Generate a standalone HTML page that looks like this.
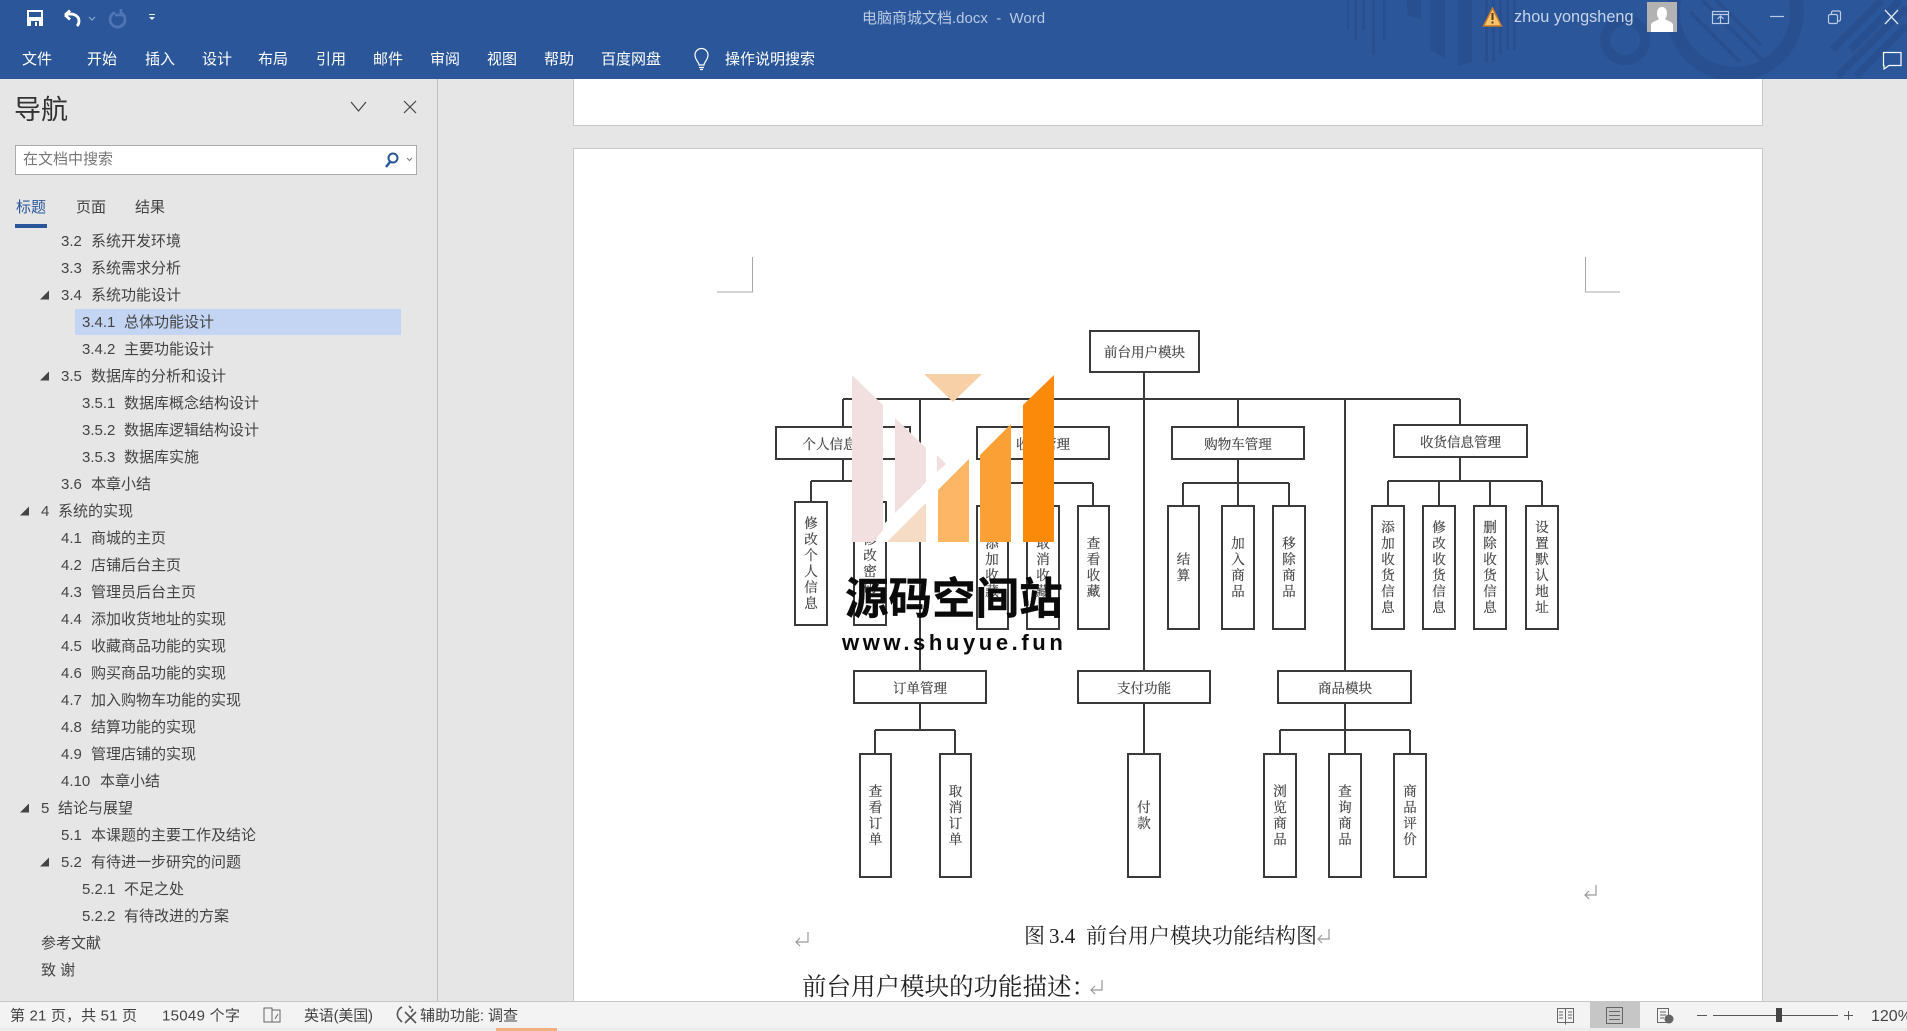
<!DOCTYPE html>
<html><head><meta charset="utf-8"><style>
html,body{margin:0;padding:0;background:#e6e6e6;width:1907px;height:1031px;overflow:hidden}
svg{display:block;position:absolute;left:0;top:0}
text{font-family:"Liberation Sans","Noto Sans CJK SC",sans-serif}
.t{font-size:15px;fill:#fff}
.n{font-size:15px;fill:#444}
.d{font-family:"Liberation Serif","Noto Serif CJK SC",serif;font-size:13.5px;fill:#444;stroke:#444;stroke-width:.2;text-anchor:middle}
.v{font-family:"Noto Serif CJK SC",serif;font-size:13.5px;fill:#444;stroke:#444;stroke-width:.2;text-anchor:middle;writing-mode:tb;glyph-orientation-vertical:0;text-orientation:upright;letter-spacing:2.5px}
.b{fill:#fff;stroke:#3a3a3a;stroke-width:2}
.l{fill:none;stroke:#3a3a3a;stroke-width:2}
.s{font-size:15px;fill:#444}
.a{fill:none;stroke:#999;stroke-width:1.2}
</style></head><body>
<svg width="1907" height="1031" viewBox="0 0 1907 1031" xmlns="http://www.w3.org/2000/svg">
<rect width="1907" height="1031" fill="#e6e6e6"/>
<!-- title bar -->
<rect width="1907" height="79" fill="#2b579a"/>
<g fill="#284f8f" stroke="none">
<rect x="1347" y="0" width="2" height="30"/><rect x="1354" y="0" width="3" height="40"/><rect x="1362" y="0" width="3" height="30"/><rect x="1372" y="0" width="3" height="55"/><rect x="1383" y="0" width="3" height="40"/>
<path d="M1407 0h14v20l-14-5zM1430 0h15v58l-15-8zM1458 0h14v62l-14 4z"/>
<rect x="1485" y="0" width="3" height="62"/><rect x="1492" y="0" width="3" height="62"/><rect x="1499" y="0" width="3" height="55"/><rect x="1506" y="0" width="3" height="50"/><rect x="1513" y="0" width="3" height="50"/>
</g>
<g fill="none" stroke="#284f8f">
<circle cx="1625" cy="40" r="20" stroke-width="10"/><circle cx="1735" cy="12" r="62" stroke-width="14"/>
<path d="M1690 12l50 50M1702 0l60 60M1716 0l45 45" stroke-width="4"/>
<path d="M1838 76l69-69M1856 76l51-51M1832 50l50-50M1850 50l50-50" stroke-width="7"/>
</g>
<!-- quick access -->
<path d="M27 10h16v16H27z" fill="#fff"/><path d="M29 12h12v5H29zM31 21h8v5h-8z" fill="#2b579a"/><rect x="35" y="22" width="2" height="4" fill="#fff"/>
<path d="M65 15c8-3 14 1 14 6 0 2-1 4-2 5M65 15l5-4.500M65 15l5 4.500" fill="none" stroke="#fff" stroke-width="2.800"/>
<path d="M89 17l3 3 3-3" fill="none" stroke="#8aa6d2" stroke-width="1.200"/>
<path d="M115 12.500a7.500 7.500 0 1 0 7 1M121 9v6h-6" fill="none" stroke="#4f76b3" stroke-width="2.800"/>
<path d="M149 17h6l-3 3zM149 14h6v1h-6z" fill="#e8eef8"/>
<text x="862" y="23" style="font-size:15px" fill="#b8c9e4">电脑商城文档.docx&#160;&#160;-&#160;&#160;Word</text>
<!-- warning -->
<path d="M1492.500 8l9 18h-18z" fill="#f6c46a" stroke="#c9772b" stroke-width="1.400"/><rect x="1491.500" y="13" width="2" height="7" fill="#5b3c12"/><rect x="1491.500" y="21.500" width="2" height="2" fill="#5b3c12"/>
<text x="1514" y="22" style="font-size:16.300px" fill="#c6d4ea">zhou yongsheng</text>
<rect x="1647" y="2" width="30" height="30" fill="#b2b2b2"/>
<path d="M1651 32v-7c0-3 5-4 8-6-3-3-3-12 3-12s6 9 3 12c3 2 8 3 8 6v7z" fill="#fff"/>
<g fill="none" stroke="#b9cae5" stroke-width="1.200"><rect x="1712.500" y="11.500" width="16" height="12"/><path d="M1712.500 14.500h16M1720.500 23v-7M1717.500 19l3-3 3 3"/>
<path d="M1770 16.500h14"/><rect x="1828.500" y="14.500" width="9" height="9" rx="1.500"/><path d="M1831.500 14.500v-2a1.500 1.500 0 0 1 1.500-1.500h6a1.500 1.500 0 0 1 1.500 1.500v7a1.500 1.500 0 0 1-1.500 1.500h-1.500"/>
<path d="M1885 10l13 14M1898 10l-13 14" stroke="#dbe4f2" stroke-width="1.300"/></g>
<path d="M1883.500 52.500h17.500v13h-12l-5 3.500v-3.500h-.5z" fill="none" stroke="#fff" stroke-width="1.200"/>
<!-- tabs -->
<g class="tabs">
<text class="t" x="22" y="64">文件</text><text class="t" x="87" y="64">开始</text><text class="t" x="145" y="64">插入</text><text class="t" x="202" y="64">设计</text><text class="t" x="258" y="64">布局</text><text class="t" x="316" y="64">引用</text><text class="t" x="373" y="64">邮件</text><text class="t" x="430" y="64">审阅</text><text class="t" x="487" y="64">视图</text><text class="t" x="544" y="64">帮助</text><text class="t" x="601" y="64">百度网盘</text><text class="t" x="725" y="64">操作说明搜索</text>
</g>
<path d="M699 65c0-3-4-5-4-10a6.500 6.500 0 0 1 13 0c0 5-4 7-4 10zM699 67.500h5M700 69.500h3" fill="none" stroke="#fff" stroke-width="1.200"/>
<!-- nav -->
<rect x="437" y="79" width="1" height="922" fill="#bdbdbd"/>
<text x="14" y="119" style="font-size:27px" fill="#333">导航</text>
<path d="M351 102l7.500 9 7.500-9M404 101l12 12M416 101l-12 12" fill="none" stroke="#444" stroke-width="1.200"/>
<rect x="15.500" y="145.500" width="401" height="29" fill="#fff" stroke="#ababab"/>
<text x="23" y="164" style="font-size:15px" fill="#777">在文档中搜索</text>
<circle cx="393" cy="158" r="4.500" fill="none" stroke="#2b579a" stroke-width="2"/><path d="M390 162l-4 5" stroke="#2b579a" stroke-width="2.500"/>
<path d="M407 158l2.500 2.500 2.500-2.500" fill="none" stroke="#777"/>
<text x="16" y="212" class="n" style="fill:#2b579a">标题</text><text x="76" y="212" class="n">页面</text><text x="135" y="212" class="n">结果</text>
<rect x="15" y="224" width="32" height="4" fill="#2b579a"/>
<rect x="75" y="309" width="326" height="26" fill="#c3d5f2"/>
<g fill="#444">
<path d="M40 299.500l9-9v9zM40 380.500l9-9v9zM20 515.500l9-9v9zM20 812.500l9-9v9zM40 866.500l9-9v9z"/>
</g>
<g class="tree">
<text class="n" x="61" y="246">3.2</text><text class="n" x="91" y="246">系统开发环境</text>
<text class="n" x="61" y="273">3.3</text><text class="n" x="91" y="273">系统需求分析</text>
<text class="n" x="61" y="300">3.4</text><text class="n" x="91" y="300">系统功能设计</text>
<text class="n" x="82" y="327">3.4.1</text><text class="n" x="124" y="327">总体功能设计</text>
<text class="n" x="82" y="354">3.4.2</text><text class="n" x="124" y="354">主要功能设计</text>
<text class="n" x="61" y="381">3.5</text><text class="n" x="91" y="381">数据库的分析和设计</text>
<text class="n" x="82" y="408">3.5.1</text><text class="n" x="124" y="408">数据库概念结构设计</text>
<text class="n" x="82" y="435">3.5.2</text><text class="n" x="124" y="435">数据库逻辑结构设计</text>
<text class="n" x="82" y="462">3.5.3</text><text class="n" x="124" y="462">数据库实施</text>
<text class="n" x="61" y="489">3.6</text><text class="n" x="91" y="489">本章小结</text>
<text class="n" x="41" y="516">4</text><text class="n" x="58" y="516">系统的实现</text>
<text class="n" x="61" y="543">4.1</text><text class="n" x="91" y="543">商城的主页</text>
<text class="n" x="61" y="570">4.2</text><text class="n" x="91" y="570">店铺后台主页</text>
<text class="n" x="61" y="597">4.3</text><text class="n" x="91" y="597">管理员后台主页</text>
<text class="n" x="61" y="624">4.4</text><text class="n" x="91" y="624">添加收货地址的实现</text>
<text class="n" x="61" y="651">4.5</text><text class="n" x="91" y="651">收藏商品功能的实现</text>
<text class="n" x="61" y="678">4.6</text><text class="n" x="91" y="678">购买商品功能的实现</text>
<text class="n" x="61" y="705">4.7</text><text class="n" x="91" y="705">加入购物车功能的实现</text>
<text class="n" x="61" y="732">4.8</text><text class="n" x="91" y="732">结算功能的实现</text>
<text class="n" x="61" y="759">4.9</text><text class="n" x="91" y="759">管理店铺的实现</text>
<text class="n" x="61" y="786">4.10</text><text class="n" x="100" y="786">本章小结</text>
<text class="n" x="41" y="813">5</text><text class="n" x="58" y="813">结论与展望</text>
<text class="n" x="61" y="840">5.1</text><text class="n" x="91" y="840">本课题的主要工作及结论</text>
<text class="n" x="61" y="867">5.2</text><text class="n" x="91" y="867">有待进一步研究的问题</text>
<text class="n" x="82" y="894">5.2.1</text><text class="n" x="124" y="894">不足之处</text>
<text class="n" x="82" y="921">5.2.2</text><text class="n" x="124" y="921">有待改进的方案</text>
<text class="n" x="41" y="948">参考文献</text>
<text class="n" x="41" y="975">致 谢</text>
</g>
<!-- pages -->
<path d="M573.500 79V125.500H1762.500V79" fill="#fff" stroke="#c8c8c8"/>
<rect x="573.500" y="148.500" width="1189" height="880" fill="#fff" stroke="#c8c8c8"/>
<path d="M752.500 257v35H717M1585.500 257v35H1620" fill="none" stroke="#a8a8a8"/>
<!-- diagram -->
<g>
<path class="l" d="M1144 372V671M843 399H1460M843 399v28M920 399V671M1043 399v28M1238 399v28M1345 399V671M1460 399v26
M843 459v22M811 481H870M811 481v21M870 481v21
M1043 459v24M992 483H1093M992 483v23M1043 483v23M1093 483v23
M1238 459v24M1183 483H1289M1183 483v23M1238 483v23M1289 483v23
M1460 457v24M1388 481H1542M1388 481v25M1439 481v25M1490 481v25M1542 481v25
M920 703v27M875 730H955M875 730v24M955 730v24
M1144 703v51
M1345 703v27M1280 730H1410M1280 730v24M1345 730v24M1410 730v24"/>
<rect class="b" x="1090" y="331" width="109" height="41"/>
<rect class="b" x="776" y="427" width="134" height="32"/>
<rect class="b" x="977" y="427" width="132" height="32"/>
<rect class="b" x="1172" y="427" width="132" height="32"/>
<rect class="b" x="1394" y="425" width="133" height="32"/>
<rect class="b" x="854" y="671" width="132" height="32"/>
<rect class="b" x="1078" y="671" width="132" height="32"/>
<rect class="b" x="1278" y="671" width="133" height="32"/>
<rect class="b" x="795" y="502" width="32" height="123"/>
<rect class="b" x="854" y="502" width="32" height="123"/>
<rect class="b" x="977" y="506" width="31" height="123"/>
<rect class="b" x="1027" y="506" width="32" height="123"/>
<rect class="b" x="1078" y="506" width="31" height="123"/>
<rect class="b" x="1168" y="506" width="31" height="123"/>
<rect class="b" x="1222" y="506" width="32" height="123"/>
<rect class="b" x="1273" y="506" width="32" height="123"/>
<rect class="b" x="1372" y="506" width="32" height="123"/>
<rect class="b" x="1423" y="506" width="32" height="123"/>
<rect class="b" x="1474" y="506" width="32" height="123"/>
<rect class="b" x="1526" y="506" width="32" height="123"/>
<rect class="b" x="860" y="754" width="31" height="123"/>
<rect class="b" x="940" y="754" width="31" height="123"/>
<rect class="b" x="1128" y="754" width="32" height="123"/>
<rect class="b" x="1264" y="754" width="32" height="123"/>
<rect class="b" x="1329" y="754" width="32" height="123"/>
<rect class="b" x="1394" y="754" width="32" height="123"/>
<text class="d" x="1144.500" y="357">前台用户模块</text>
<text class="d" x="843" y="449">个人信息管理</text>
<text class="d" x="1043" y="449">收藏管理</text>
<text class="d" x="1238" y="449">购物车管理</text>
<text class="d" x="1460.500" y="447">收货信息管理</text>
<text class="d" x="920" y="693">订单管理</text>
<text class="d" x="1144" y="693">支付功能</text>
<text class="d" x="1345" y="693">商品模块</text>
<text class="v" x="811" y="564">修改个人信息</text>
<text class="v" x="870" y="564">修改密码</text>
<text class="v" x="992" y="568">添加收藏</text>
<text class="v" x="1043" y="568">取消收藏</text>
<text class="v" x="1093.500" y="568">查看收藏</text>
<text class="v" x="1183.500" y="568">结算</text>
<text class="v" x="1238" y="568">加入商品</text>
<text class="v" x="1289" y="568">移除商品</text>
<text class="v" x="1388" y="568">添加收货信息</text>
<text class="v" x="1439" y="568">修改收货信息</text>
<text class="v" x="1490" y="568">删除收货信息</text>
<text class="v" x="1542" y="568">设置默认地址</text>
<text class="v" x="875.500" y="816">查看订单</text>
<text class="v" x="955.500" y="816">取消订单</text>
<text class="v" x="1144" y="816">付款</text>
<text class="v" x="1280" y="816">浏览商品</text>
<text class="v" x="1345" y="816">查询商品</text>
<text class="v" x="1410" y="816">商品评价</text>
</g>
<!-- watermark -->
<path d="M883 448L926 482V503L887 542H883L926 482z" fill="#fff"/>
<path d="M926 420H938V542H926z" fill="#fff"/>
<path d="M926 482L895 513 883 525V542H887L926 503z" fill="#fff"/>
<path d="M852 375L883 405V530L873 542H852z" fill="#f2e0e0"/>
<path d="M895 418L926 448V482L895 513z" fill="#f2e0e0"/>
<path d="M937 455L946 464 937 472z" fill="#f2e0e0"/>
<path d="M887 542L926 503V542z" fill="#f7dcc5"/>
<path d="M924 374H982L953 402z" fill="#f8d0a8"/>
<path d="M938 490L969 459V542H938z" fill="#fcb665"/>
<path d="M980 455L1011 424V542H980z" fill="#fba035"/>
<path d="M1023 405L1054 375V542H1023z" fill="#fb8a0a"/>
<text x="845" y="614" style="font-family:'Noto Sans CJK SC',sans-serif;font-size:43.500px;font-weight:700;stroke:#0a0a0a;stroke-width:.4" fill="#0a0a0a">源码空间站</text>
<text x="842" y="650" style="font-family:'Liberation Sans',sans-serif;font-size:22px;font-weight:700;letter-spacing:3.6px" fill="#0a0a0a">www.shuyue.fun</text>
<!-- captions -->
<text x="1024" y="943" style="font-family:'Noto Serif CJK SC',serif;font-size:21px" fill="#222">图</text>
<text x="1049" y="943" style="font-family:'Liberation Serif',serif;font-size:21px" fill="#222">3.4</text>
<text x="1086" y="943" style="font-family:'Noto Serif CJK SC',serif;font-size:21px" fill="#222">前台用户模块功能结构图</text>
<text x="802" y="995" style="font-family:'Noto Serif CJK SC',serif;font-size:24.500px" fill="#222">前台用户模块的功能描述：</text>
<path class="a" d="M1329 929v10h-11M1322 935l-4 4 4 4M808 932v10h-12M800 938l-4 4 4 4M1596 885v10h-11M1589 891l-4 4 4 4M1102 980v10h-11M1095 986l-4 4 4 4"/>
<!-- status bar -->
<rect y="1001" width="1907" height="30" fill="#f3f3f3"/>
<rect y="1001" width="1907" height="1" fill="#c6c6c6"/>
<rect y="1028" width="1907" height="3" fill="#ececec"/>
<rect x="496" y="1028" width="61" height="3" fill="#f0b080"/>
<text class="s" x="10" y="1020.500" textLength="127">第 21 页，共 51 页</text>
<text class="s" x="162" y="1020.500" textLength="78">15049 个字</text>
<path d="M264 1008h8v14h-8zM272 1010h8v12h-8zM275 1019l3-5" fill="none" stroke="#666"/>
<text class="s" x="304" y="1020.500" textLength="69">英语(美国)</text>
<path d="M402 1007a8 8 0 0 0-3 12l3 3M409 1006l2 2M413 1009l-2 3M405 1012l11 11M416 1012l-11 11" fill="none" stroke="#555" stroke-width="1.600"/>
<text class="s" x="420" y="1020.500" textLength="98">辅助功能: 调查</text>
<path d="M1557.500 1008.500h16v14h-16zM1565.500 1008.500v16M1559 1012h4M1559 1015h4M1559 1018h4M1568 1012h4M1568 1015h4M1568 1018h4" fill="none" stroke="#666"/>
<rect x="1590" y="1001" width="50" height="27" fill="#c6c6c6"/>
<path d="M1606.500 1007.500h16v16h-16zM1609 1011.500h11M1609 1015.500h11M1609 1019.500h11" fill="none" stroke="#666"/>
<path d="M1657.500 1008.500h11v14h-11zM1660 1012h6M1660 1015h6M1660 1018h4" fill="none" stroke="#666"/><circle cx="1669" cy="1019" r="4.500" fill="#666"/>
<path d="M1697 1015.500h10M1713 1015.500h125M1844 1015.500h9M1848.500 1011v9" stroke="#555" fill="none"/>
<rect x="1776" y="1008" width="6" height="14" fill="#444"/>
<text x="1871" y="1021" style="font-size:16px" fill="#444">120%</text>
</svg>
</body></html>
